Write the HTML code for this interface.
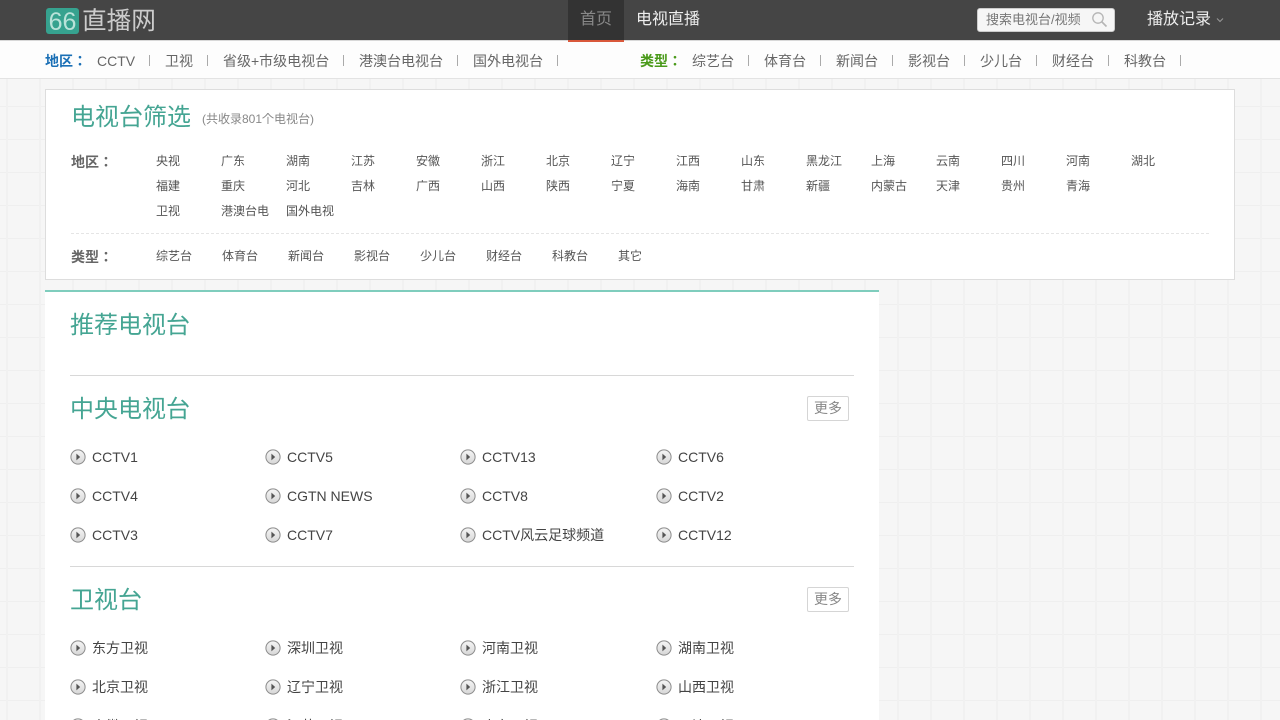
<!DOCTYPE html>
<html><head><meta charset="utf-8"><title>66直播网</title>
<style>
*{box-sizing:border-box}
html,body{margin:0;padding:0;width:1280px;height:720px;overflow:hidden}
body{position:relative;font-family:"Liberation Sans","Noto Sans CJK JP",sans-serif;font-size:14px;color:#555;
background-color:#f6f6f6;
background-image:linear-gradient(to right,#f1f1f1 2px,transparent 2px),linear-gradient(to bottom,#efefef 1px,transparent 1px);
background-size:33px 33px;background-position:6px 7px}
a,span,div.t{position:absolute;white-space:nowrap}
.abs{position:absolute}
#hd{left:0;top:0;width:1280px;height:40px;background:#454545}
#sub{left:0;top:40px;width:1280px;height:39px;background:#fdfdfd;border-top:1px solid #d8d8d8;border-bottom:1px solid #e3e3e3}
#filter{left:45px;top:89px;width:1190px;height:191px;background:#fff;border:1px solid #ddd}
#main{left:45px;top:290px;width:834px;height:430px;background:#fff;border-top:2px solid #7fcdbd}
.n{font-size:14px;color:#666;top:53px;line-height:16px}
.sep{top:55px;width:1px;height:11px;background:#aaa}
.f{font-size:12px;color:#555;line-height:14px}
.h{color:#45a593;font-size:24px;line-height:30px}
.l{font-size:14px;color:#444;line-height:16px}
.hr{left:70px;width:784px;height:1px;background:#d8d8d8}
.more{left:807px;width:42px;height:25px;border:1px solid #d5d5d5;border-radius:2px;background:#fff;color:#888;font-size:14px;line-height:23px;text-align:center}
.ic{width:16px;height:16px}
</style></head><body>
<div class="abs" id="hd"></div>
<div class="abs" id="sub"></div>
<div class="abs" style="left:46px;top:8px;width:33px;height:26px;background:#36a28f;border-radius:3px;color:#b9e2d9;font-size:25px;line-height:28px;text-align:center;letter-spacing:0">66</div>
<span style="left:82px;top:7px;font-size:24.6px;line-height:30px;color:#ccc">直播网</span>
<div class="abs" style="left:568px;top:0;width:56px;height:42px;background:#333;border-bottom:2px solid #d9583b"></div>
<span style="left:580px;top:11px;font-size:16px;line-height:18px;color:#888">首页</span>
<span style="left:636px;top:11px;font-size:16px;line-height:18px;color:#eee">电视直播</span>
<div class="abs" style="left:977px;top:8px;width:138px;height:24px;background:#f6f6f6;border:1px solid #ccc;border-radius:3px"></div>
<span style="left:986px;top:12px;font-size:13px;line-height:16px;color:#777">搜索电视台/视频</span>
<svg class="abs" style="left:1091px;top:11px" width="17" height="17" viewBox="0 0 17 17"><circle cx="7" cy="7" r="5.2" fill="none" stroke="#b5b5b5" stroke-width="1.3"/><path d="M11 11l4.5 4.5" stroke="#b5b5b5" stroke-width="1.6" fill="none"/></svg>
<span style="left:1147px;top:11px;font-size:16px;line-height:18px;color:#eee">播放记录</span>
<svg class="abs" style="left:1216px;top:17px" width="8" height="6" viewBox="0 0 8 6"><path d="M1 1.5l3 3 3-3" stroke="#999" fill="none"/></svg>

<span class="n" style="left:45px;color:#1a6fb5;font-weight:bold">地区：</span>
<span class="n" style="left:97px">CCTV</span><i class="abs sep" style="left:149px"></i>
<span class="n" style="left:165px">卫视</span><i class="abs sep" style="left:207px"></i>
<span class="n" style="left:223px">省级+市级电视台</span><i class="abs sep" style="left:343px"></i>
<span class="n" style="left:359px">港澳台电视台</span><i class="abs sep" style="left:457px"></i>
<span class="n" style="left:473px">国外电视台</span><i class="abs sep" style="left:557px"></i>
<span class="n" style="left:640px;color:#4a9a1a;font-weight:bold">类型：</span>
<span class="n" style="left:692px">综艺台</span><i class="abs sep" style="left:748px"></i>
<span class="n" style="left:764px">体育台</span><i class="abs sep" style="left:820px"></i>
<span class="n" style="left:836px">新闻台</span><i class="abs sep" style="left:892px"></i>
<span class="n" style="left:908px">影视台</span><i class="abs sep" style="left:964px"></i>
<span class="n" style="left:980px">少儿台</span><i class="abs sep" style="left:1036px"></i>
<span class="n" style="left:1052px">财经台</span><i class="abs sep" style="left:1108px"></i>
<span class="n" style="left:1124px">科教台</span><i class="abs sep" style="left:1180px"></i>

<div class="abs" id="filter"></div>
<span class="h" style="left:71px;top:103px">电视台筛选</span>
<span style="left:202px;top:111px;font-size:12px;line-height:16px;color:#888">(共收录801个电视台)</span>
<span style="left:71px;top:154px;font-size:14px;line-height:16px;font-weight:bold;color:#666">地区：</span>
<span class="f" style="left:156px;top:154px">央视</span><span class="f" style="left:221px;top:154px">广东</span><span class="f" style="left:286px;top:154px">湖南</span><span class="f" style="left:351px;top:154px">江苏</span><span class="f" style="left:416px;top:154px">安徽</span><span class="f" style="left:481px;top:154px">浙江</span><span class="f" style="left:546px;top:154px">北京</span><span class="f" style="left:611px;top:154px">辽宁</span><span class="f" style="left:676px;top:154px">江西</span><span class="f" style="left:741px;top:154px">山东</span><span class="f" style="left:806px;top:154px">黑龙江</span><span class="f" style="left:871px;top:154px">上海</span><span class="f" style="left:936px;top:154px">云南</span><span class="f" style="left:1001px;top:154px">四川</span><span class="f" style="left:1066px;top:154px">河南</span><span class="f" style="left:1131px;top:154px">湖北</span>
<span class="f" style="left:156px;top:179px">福建</span><span class="f" style="left:221px;top:179px">重庆</span><span class="f" style="left:286px;top:179px">河北</span><span class="f" style="left:351px;top:179px">吉林</span><span class="f" style="left:416px;top:179px">广西</span><span class="f" style="left:481px;top:179px">山西</span><span class="f" style="left:546px;top:179px">陕西</span><span class="f" style="left:611px;top:179px">宁夏</span><span class="f" style="left:676px;top:179px">海南</span><span class="f" style="left:741px;top:179px">甘肃</span><span class="f" style="left:806px;top:179px">新疆</span><span class="f" style="left:871px;top:179px">内蒙古</span><span class="f" style="left:936px;top:179px">天津</span><span class="f" style="left:1001px;top:179px">贵州</span><span class="f" style="left:1066px;top:179px">青海</span>
<span class="f" style="left:156px;top:204px">卫视</span><span class="f" style="left:221px;top:204px">港澳台电</span><span class="f" style="left:286px;top:204px">国外电视</span>
<div class="abs" style="left:71px;top:233px;width:1138px;border-top:1px dashed #e5e5e5"></div>
<span style="left:71px;top:249px;font-size:14px;line-height:16px;font-weight:bold;color:#666">类型：</span>
<span class="f" style="left:156px;top:249px">综艺台</span><span class="f" style="left:222px;top:249px">体育台</span><span class="f" style="left:288px;top:249px">新闻台</span><span class="f" style="left:354px;top:249px">影视台</span><span class="f" style="left:420px;top:249px">少儿台</span><span class="f" style="left:486px;top:249px">财经台</span><span class="f" style="left:552px;top:249px">科教台</span><span class="f" style="left:618px;top:249px">其它</span>

<div class="abs" id="main"></div>
<span class="h" style="left:70px;top:311px">推荐电视台</span>
<div class="abs hr" style="top:375px"></div>
<span class="h" style="left:70px;top:395px">中央电视台</span>
<div class="abs more" style="top:396px">更多</div>
<div class="abs hr" style="top:566px"></div>
<span class="h" style="left:70px;top:586px">卫视台</span>
<div class="abs more" style="top:587px">更多</div>

<svg width="0" height="0" style="position:absolute"><defs>
<linearGradient id="g" x1="0" y1="0" x2="0" y2="1"><stop offset="0" stop-color="#f4f4f4"/><stop offset="1" stop-color="#d8d8d8"/></linearGradient>
<symbol id="p" viewBox="0 0 16 16"><circle cx="8" cy="8" r="7.6" fill="#8c8c8c"/><circle cx="8" cy="8" r="6.6" fill="url(#g)"/><path d="M6.4 4.6l3.8 3.4-3.8 3.4z" fill="#555"/></symbol>
</defs></svg>

<svg class="abs ic" style="left:70px;top:449px"><use href="#p"/></svg><span class="l" style="left:92px;top:449px">CCTV1</span>
<svg class="abs ic" style="left:265px;top:449px"><use href="#p"/></svg><span class="l" style="left:287px;top:449px">CCTV5</span>
<svg class="abs ic" style="left:460px;top:449px"><use href="#p"/></svg><span class="l" style="left:482px;top:449px">CCTV13</span>
<svg class="abs ic" style="left:656px;top:449px"><use href="#p"/></svg><span class="l" style="left:678px;top:449px">CCTV6</span>
<svg class="abs ic" style="left:70px;top:488px"><use href="#p"/></svg><span class="l" style="left:92px;top:488px">CCTV4</span>
<svg class="abs ic" style="left:265px;top:488px"><use href="#p"/></svg><span class="l" style="left:287px;top:488px">CGTN NEWS</span>
<svg class="abs ic" style="left:460px;top:488px"><use href="#p"/></svg><span class="l" style="left:482px;top:488px">CCTV8</span>
<svg class="abs ic" style="left:656px;top:488px"><use href="#p"/></svg><span class="l" style="left:678px;top:488px">CCTV2</span>
<svg class="abs ic" style="left:70px;top:527px"><use href="#p"/></svg><span class="l" style="left:92px;top:527px">CCTV3</span>
<svg class="abs ic" style="left:265px;top:527px"><use href="#p"/></svg><span class="l" style="left:287px;top:527px">CCTV7</span>
<svg class="abs ic" style="left:460px;top:527px"><use href="#p"/></svg><span class="l" style="left:482px;top:527px">CCTV风云足球频道</span>
<svg class="abs ic" style="left:656px;top:527px"><use href="#p"/></svg><span class="l" style="left:678px;top:527px">CCTV12</span>

<svg class="abs ic" style="left:70px;top:640px"><use href="#p"/></svg><span class="l" style="left:92px;top:640px">东方卫视</span>
<svg class="abs ic" style="left:265px;top:640px"><use href="#p"/></svg><span class="l" style="left:287px;top:640px">深圳卫视</span>
<svg class="abs ic" style="left:460px;top:640px"><use href="#p"/></svg><span class="l" style="left:482px;top:640px">河南卫视</span>
<svg class="abs ic" style="left:656px;top:640px"><use href="#p"/></svg><span class="l" style="left:678px;top:640px">湖南卫视</span>
<svg class="abs ic" style="left:70px;top:679px"><use href="#p"/></svg><span class="l" style="left:92px;top:679px">北京卫视</span>
<svg class="abs ic" style="left:265px;top:679px"><use href="#p"/></svg><span class="l" style="left:287px;top:679px">辽宁卫视</span>
<svg class="abs ic" style="left:460px;top:679px"><use href="#p"/></svg><span class="l" style="left:482px;top:679px">浙江卫视</span>
<svg class="abs ic" style="left:656px;top:679px"><use href="#p"/></svg><span class="l" style="left:678px;top:679px">山西卫视</span>
<svg class="abs ic" style="left:70px;top:718px"><use href="#p"/></svg><span class="l" style="left:92px;top:718px">安徽卫视</span>
<svg class="abs ic" style="left:265px;top:718px"><use href="#p"/></svg><span class="l" style="left:287px;top:718px">江苏卫视</span>
<svg class="abs ic" style="left:460px;top:718px"><use href="#p"/></svg><span class="l" style="left:482px;top:718px">广东卫视</span>
<svg class="abs ic" style="left:656px;top:718px"><use href="#p"/></svg><span class="l" style="left:678px;top:718px">天津卫视</span>
</body></html>
